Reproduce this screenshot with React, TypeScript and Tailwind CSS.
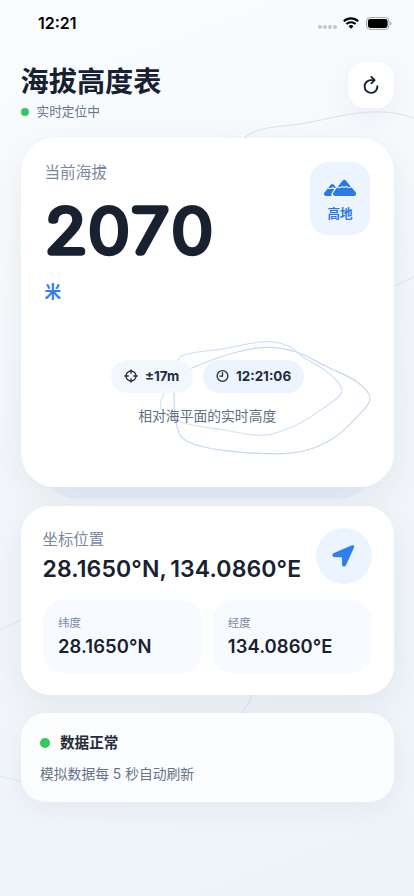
import React from 'react';

type Point = [number, number];

// Closed Catmull-Rom curve through the given points.
function contour(points: Point[]): string {
  const n = points.length;
  let d = `M${points[0][0]} ${points[0][1]}`;
  for (let i = 0; i < n; i++) {
    const p0 = points[(i - 1 + n) % n];
    const p1 = points[i];
    const p2 = points[(i + 1) % n];
    const p3 = points[(i + 2) % n];
    d += ` C${p1[0] + (p2[0] - p0[0]) / 6} ${p1[1] + (p2[1] - p0[1]) / 6} ${p2[0] - (p3[0] - p1[0]) / 6} ${p2[1] - (p3[1] - p1[1]) / 6} ${p2[0]} ${p2[1]}`;
  }
  return d + 'Z';
}

const outerRing: Point[] = [
  [190.7, 368.3], [233, 353], [266.7, 347.3], [296.7, 352.3], [326, 366.5], [356, 381.5],
  [369.5, 398.3], [356.7, 416.7], [330, 440], [290, 453.2], [223, 450.3], [187, 441.5],
  [176, 425], [173.5, 393], [176, 378],
];

const innerRing: Point[] = [
  [177.3, 360], [190, 353.3], [223, 348.6], [263, 341.8], [286.7, 345.5], [303, 357.3],
  [326.7, 372], [341.5, 391], [323, 408], [296.7, 424.5], [264, 435.2], [223, 430],
  [178, 421.5], [160.5, 408], [163.5, 393.3], [172, 378],
];

function Backdrop() {
  return (
    <svg className="pointer-events-none absolute inset-0" width="414" height="896" fill="none">
      <g strokeWidth="1">
        <path stroke="#d5e2ef" d="M243 139C252 131 262 128 283 126C312 124 335 115 366 112.3C386 111 401 113 414 118.5" />
        <path stroke="#dce4f0" d="M390 287.5Q402 283 416 275.5" />
        <path stroke="#dfe7f4" d="M-2 630.5Q10 626 22 619" />
        <path stroke="#dde2ec" d="M253 693Q250 703 241 714" />
        <path stroke="#e0e7f5" d="M-2 776Q18 782 36 782" />
      </g>
    </svg>
  );
}

function StatusBar() {
  return (
    <div className="flex h-[46px] items-center justify-between pr-[22.5px] pl-[38px]">
      <span className="text-[16px] font-semibold leading-5 text-black">12:21</span>
      <div className="flex items-center">
        <div className="mt-[8px] mr-[6.5px] flex gap-[1.3px]">
          {[0, 1, 2, 3].map((i) => (
            <span key={i} className="size-[3.7px] rounded-full bg-[#c3c6ca]" />
          ))}
        </div>
        <svg width="16" height="12" viewBox="0 0 16 12" className="mr-[6.5px]" fill="none" stroke="#000" strokeWidth="2.1">
          <path d="M.8 4.3a10.3 10.3 0 0 1 14.4 0" />
          <path d="M3.4 7.1a6.5 6.5 0 0 1 9.2 0" />
          <path d="M5.5 9.3a3.6 3.6 0 0 1 5 0L8 11.8Z" fill="#000" stroke="none" />
        </svg>
        <svg width="26" height="13" viewBox="0 0 27 13" fill="none" preserveAspectRatio="none">
          <rect x=".5" y=".6" width="23.4" height="11.8" rx="3.6" stroke="#a0a2a4" />
          <rect x="2" y="2.1" width="20.4" height="8.8" rx="2.3" fill="#000" />
          <path d="M25.2 4.6v3.8c.8-.3 1.3-1.1 1.3-1.9s-.5-1.6-1.3-1.9Z" fill="#a0a2a4" />
        </svg>
      </div>
    </div>
  );
}

function Header() {
  return (
    <header className="flex h-[62px] justify-between pt-[16px]">
      <div>
        <h1 className="pt-[1px] text-[28.2px] font-bold leading-[38px] text-[#182130]">海拔高度表</h1>
        <div className="mt-[2px] flex items-center gap-[8px]">
          <span className="size-2 rounded-full bg-[#34c759]" />
          <span className="text-[12.7px] leading-[18px] text-[#66758d]">实时定位中</span>
        </div>
      </div>
      <button className="flex size-[46px] items-center justify-center rounded-[17px] bg-white shadow-[0_8px_26px_rgba(30,50,80,0.06)]">
        <svg width="20" height="20" viewBox="0 0 20 20" fill="none" stroke="#182130" strokeWidth="1.9" strokeLinecap="round" strokeLinejoin="round">
          <path d="M16.4 11.1A6.4 6.4 0 1 1 10 5.1H13.2" />
          <path d="M10.4 1.9 13.6 5.1 10.4 8.3" />
        </svg>
      </button>
    </header>
  );
}

function Mountains() {
  return (
    <svg width="34" height="18" viewBox="0 0 34 18" fill="#2b79e6">
      <path d="M14.9 7.5 19.3 1.9Q21.3-.2 23.3 1.9L27.7 7.4Q26 8.8 24.4 7.5L23.3 6.8 22 7.6Q21.2 8.1 20.4 7.6L19.2 6.8 17.8 7.7Q16.3 8.7 14.9 7.5Z" />
      <path d="M14 8.6Q16.4 10 19.3 8.2Q21.3 9.6 23.3 8.2Q26 9.9 28.7 8.4L32.6 13.3Q34.2 16.7 30.8 17H12.4Q8.7 16.6 10.7 13.1Z" />
      <path d="M5.5 8.4 7.5 6Q9.3 4.2 11.1 6L12.9 8.2Q11.8 9.6 10.7 8.6L9.6 8 8.4 8.8Q7 9.6 5.5 8.4Z" />
      <path d="M4.8 9.4Q6.7 10.7 9 9.5Q10 10.2 11.2 10.2L9.4 12.9Q7.6 15.3 8.7 17H3Q-.2 16.6 1.5 13.6Z" />
    </svg>
  );
}

function Chip({ icon, text, className }: { icon: React.ReactNode; text: string; className: string }) {
  return (
    <div className={`flex h-[33px] items-center rounded-full pl-[12.5px] ${className}`}>
      {icon}
      <span className="ml-[7.5px] text-[13.4px] font-bold leading-5 whitespace-nowrap text-[#232c3b]">{text}</span>
    </div>
  );
}

function AltitudeCard() {
  return (
    <section className="relative mt-[30px] h-[349px]">
      <div className="absolute inset-x-[20px] top-5 -bottom-3 rounded-[36px] bg-[#e6f0fa]" />
      <div className="relative flex h-full flex-col rounded-[34px] bg-white pr-[23.5px] pl-[24px] pt-[24.5px] shadow-[0_10px_34px_rgba(30,45,70,0.075)]">
        <svg className="pointer-events-none absolute top-0 left-0" width="373" height="349" viewBox="20.5 138 373 349" fill="none" strokeWidth="1.2">
          <path d={contour(outerRing)} stroke="#c5d8f1" />
          <path d={contour(innerRing)} stroke="#d3e2f6" />
        </svg>
        <div className="flex h-[104px] justify-between">
          <div>
            <div className="pt-[0.5px] text-[15.6px] leading-[20px] text-[#7a899f]">当前海拔</div>
            <svg className="mt-[1px] block" width="200" height="92" fill="#182130" stroke="#182130" strokeWidth="7.6" strokeLinejoin="round">
              <text
                transform="translate(-44.5 68.2) scale(1.13 1)"
                x="58.1 95.9 132.6 169.6"
                y="0"
                fontSize="59"
                fontWeight="100"
                textAnchor="middle"
              >
                2070
              </text>
            </svg>
          </div>
          <div className="-mt-[0.5px] flex h-[73px] w-[60px] flex-col items-center rounded-[18px] bg-[#ecf5ff] pt-[17px]">
            <Mountains />
            <span className="mt-[8px] text-[12.6px] font-bold leading-[18px] text-[#2b79e6]">高地</span>
          </div>
        </div>
        <div className="mt-[14.5px] text-[16.6px] font-bold leading-[22px] text-[#2f80ed]">米</div>
        <div className="relative mt-[56.5px] flex justify-center gap-[10px]">
          <Chip
            className="w-[82px] bg-[#f2f7ff]"
            text="±17m"
            icon={
              <svg width="14" height="14" viewBox="0 0 14 14" fill="none" stroke="#232c3b" strokeWidth="1.3" strokeLinecap="round">
                <circle cx="7" cy="7" r="5" />
                <path d="M7 .8v3.5M7 9.7v3.5M.8 7h3.5M9.7 7h3.5" />
              </svg>
            }
          />
          <Chip
            className="w-[100.5px] bg-[#ecf5ff]"
            text="12:21:06"
            icon={
              <svg width="13" height="14" viewBox="0 0 13 14" fill="none" stroke="#232c3b" strokeWidth="1.3" strokeLinecap="round" strokeLinejoin="round">
                <circle cx="6.5" cy="7" r="5.4" />
                <path d="M6.5 3.7V7.2H3.9" />
              </svg>
            }
          />
        </div>
        <div className="relative mt-[13px] text-center text-[13.8px] leading-[20px] text-[#5f6f87]">相对海平面的实时高度</div>
      </div>
    </section>
  );
}

function Coordinate({ label, value }: { label: string; value: string }) {
  return (
    <div className="h-[73px] flex-1 rounded-[21px] bg-[#f7faff] pt-[15px] pl-[15.5px]">
      <div className="text-[11.6px] leading-[17px] text-[#7a899f]">{label}</div>
      <div className="mt-[3.5px] text-[18.4px] font-semibold leading-[23px] tracking-[0.1px] text-[#182130]">{value}</div>
    </div>
  );
}

function LocationCard() {
  return (
    <section className="relative mt-[18.5px] h-[189.5px] rounded-[29px] bg-white px-[22px] pt-[22px] shadow-[0_10px_34px_rgba(30,45,70,0.07)]">
      <div className="flex justify-between">
        <div className="w-0">
          <div className="pt-[2px] whitespace-nowrap text-[15.4px] leading-[20px] text-[#7a899f]">坐标位置</div>
          <div className="mt-[4px] text-[23px] font-semibold leading-[30px] tracking-[0.13px] whitespace-nowrap text-[#182130] [word-spacing:-2.3px]">28.1650°N, 134.0860°E</div>
        </div>
        <div className="flex size-[56px] shrink-0 items-center justify-center rounded-full bg-[#ecf5ff]">
          <svg width="24" height="24" viewBox="0 0 24 24" fill="#2f80ed" stroke="#2f80ed" strokeWidth="3.2" strokeLinejoin="round">
            <path d="M20.6 2.8 2 10.7 2.1 11.4 11.4 11.9 11.7 20.9H12.4Z" />
          </svg>
        </div>
      </div>
      <div className="mt-[16px] flex gap-[10.5px]">
        <Coordinate label="纬度" value="28.1650°N" />
        <Coordinate label="经度" value="134.0860°E" />
      </div>
    </section>
  );
}

function StatusCard() {
  return (
    <section className="relative mt-[18px] h-[88.5px] rounded-[25px] bg-[#fcfdfe] px-[19.5px] pt-[19.5px] shadow-[0_8px_26px_rgba(30,45,70,0.05)]">
      <div className="flex items-center gap-[10px]">
        <span className="size-[10px] rounded-full bg-[#34c759]" />
        <span className="text-[14.6px] font-bold leading-[20px] text-[#232c3b]">数据正常</span>
      </div>
      <div className="mt-[11.5px] text-[13.8px] leading-[20px] text-[#64738b]">模拟数据每 5 秒自动刷新</div>
    </section>
  );
}

export default function App() {
  return (
    <div className="relative h-[896px] w-full overflow-hidden bg-[linear-gradient(160deg,#fafdff_0%,#f3f7fb_45%,#eef3f8_100%)] font-['Inter','Noto_Sans_CJK_SC',sans-serif]">
      <Backdrop />
      <StatusBar />
      <main className="px-[20.5px]">
        <Header />
        <AltitudeCard />
        <LocationCard />
        <StatusCard />
      </main>
    </div>
  );
}
